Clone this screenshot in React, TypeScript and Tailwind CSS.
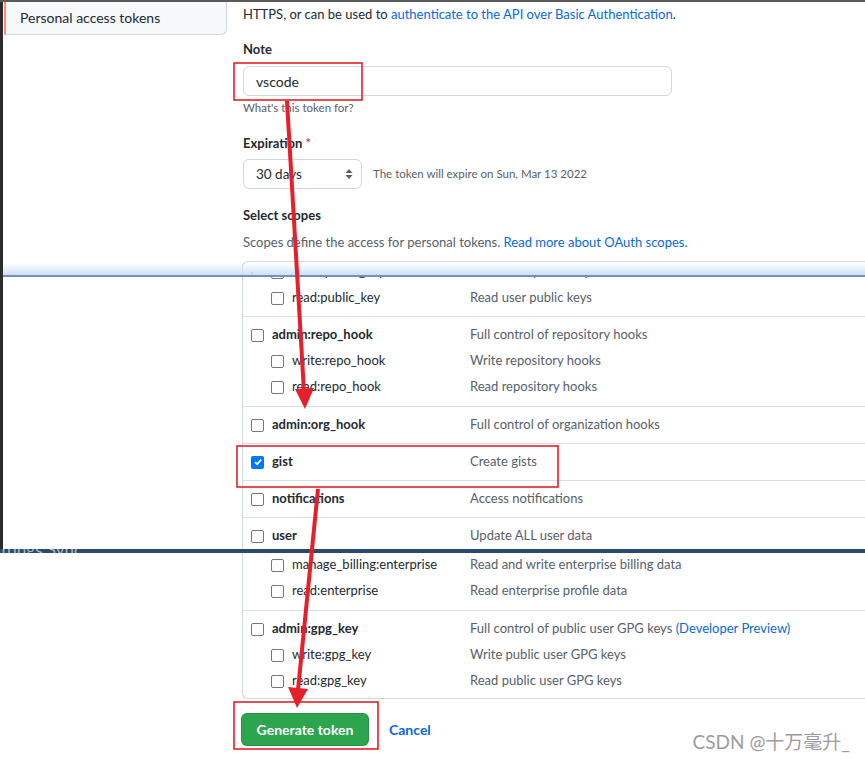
import React from 'react';

type Item = { name: string; desc: React.ReactNode; nested?: boolean; checked?: boolean };

function Check({ checked }: { checked?: boolean }) {
  if (checked) {
    return (
      <span className="flex h-[13px] w-[13px] shrink-0 items-center justify-center rounded-[2px] bg-[#0075ff]">
        <svg width="10" height="10" viewBox="0 0 10 10">
          <path d="M2 5.2 L4.1 7.3 L8.2 2.6" stroke="white" strokeWidth="1.8" fill="none" />
        </svg>
      </span>
    );
  }
  return <span className="h-[13px] w-[13px] shrink-0 rounded-[2px] border border-[#767676] bg-white" />;
}

function Row({ name, desc, nested, checked }: Item) {
  return (
    <div className="flex h-[26px] items-center whitespace-nowrap">
      <div className={nested ? 'flex w-[227px] items-center pl-[28px]' : 'flex w-[227px] items-center pl-[8px]'}>
        <Check checked={checked} />
        <span className={nested ? 'ml-[8px] text-[13px]' : 'ml-[8px] text-[13px] font-bold'}>{name}</span>
      </div>
      <div className="text-[13px] text-[#57606a]">{desc}</div>
    </div>
  );
}

function Group({ items, pad = 'py-[5px]', last }: { items: Item[]; pad?: string; last?: boolean }) {
  return (
    <div className={last ? pad : `border-b border-[#d8dee4] ${pad}`}>
      {items.map((it) => (
        <Row key={it.name} {...it} />
      ))}
    </div>
  );
}

export default function App() {
  return (
    <div className="relative h-[759px] w-[865px] overflow-hidden bg-white font-[Lato,'Noto_Sans_CJK_SC',sans-serif] text-[#24292f]">
      <div className="h-[2px] bg-[#5a5a5a]" />

      <div className="flex">
        {/* dark edge of the window behind */}
        <div className="w-[3px] shrink-0 bg-[#2b2b2b]" />

        <div className="min-w-0 flex-1">
          {/* upper screenshot */}
          <div className="relative h-[273px] overflow-hidden">
            <div className="flex">
              <div className="ml-[1px] flex h-[33px] w-[223px] shrink-0 items-center rounded-br-[6px] border-b border-l-2 border-r border-b-[#d0d7de] border-l-[#fd8c73] border-r-[#d0d7de] bg-[#f6f8fa] pb-[2px] pl-[14px] text-[14px]">
                Personal access tokens
              </div>

              <div className="ml-[16px] min-w-0 flex-1">
                <p className="mt-[2px] h-[20px] whitespace-nowrap text-[13px] leading-[20px]">
                  HTTPS, or can be used to{' '}
                  <span className="text-[#0969da]">authenticate to the API over Basic Authentication</span>.
                </p>

                <div className="mt-[15px] h-[20px] text-[13px] font-bold leading-[20px]">Note</div>
                <div className="mt-[7px] flex h-[30px] w-[429px] items-center rounded-[6px] border border-[#d0d7de] bg-white pl-[12px] text-[14px]">
                  vscode
                </div>
                <div className="mt-[4px] h-[16px] text-[11.5px] leading-[16px] text-[#57606a]">What's this token for?</div>

                <div className="mt-[17px] h-[20px] text-[13px] font-bold leading-[20px]">
                  Expiration <span className="font-normal text-[#cf222e]">*</span>
                </div>
                <div className="mt-[6px] flex items-center">
                  <div className="flex h-[30px] w-[119px] items-center justify-between rounded-[6px] border border-[#d0d7de] bg-white pl-[12px] pr-[8px] text-[13.5px]">
                    30 days
                    <svg width="8" height="12" viewBox="0 0 8 12">
                      <path d="M4 1 L7.5 5 L0.5 5 Z M4 11 L7.5 7 L0.5 7 Z" fill="#57606a" />
                    </svg>
                  </div>
                  <span className="ml-[11px] text-[11.5px] text-[#57606a]">The token will expire on Sun, Mar 13 2022</span>
                </div>

                <div className="mt-[16px] h-[20px] text-[13px] font-bold leading-[20px]">Select scopes</div>
                <p className="mt-[7px] h-[20px] whitespace-nowrap text-[13px] leading-[20px] text-[#57606a]">
                  Scopes define the access for personal tokens.{' '}
                  <span className="text-[#0969da]">Read more about OAuth scopes.</span>
                </p>

                <div className="ml-[-1px] mt-[9px] h-[40px] rounded-tl-[6px] border-l border-t border-[#d0d7de] pl-[8px] pt-[9px]">
                  <Check />
                </div>
              </div>
            </div>
            <div className="absolute bottom-0 left-0 right-0 h-[12px] bg-gradient-to-b from-white/0 to-[#cfe1f6]" />
          </div>
          <div className="h-[2px] bg-[#6f90c2]" />

          {/* middle screenshot */}
          <div className="flex h-[272px] overflow-hidden">
            <div className="w-[239px] shrink-0" />
            <div className="min-w-0 flex-1 border-l border-[#d0d7de]">
              <div className="h-[8px] overflow-hidden">
                <div className="mt-[-18px]">
                  <Row name="write:public_key" desc="Write user public keys" nested />
                </div>
              </div>
              <div className="border-b border-[#d8dee4] pb-[5px]">
                <Row name="read:public_key" desc="Read user public keys" nested />
              </div>
              <Group
                pad="pt-[5px] pb-[6px]"
                items={[
                  { name: 'admin:repo_hook', desc: 'Full control of repository hooks' },
                  { name: 'write:repo_hook', desc: 'Write repository hooks', nested: true },
                  { name: 'read:repo_hook', desc: 'Read repository hooks', nested: true },
                ]}
              />
              <Group items={[{ name: 'admin:org_hook', desc: 'Full control of organization hooks' }]} />
              <Group items={[{ name: 'gist', desc: 'Create gists', checked: true }]} />
              <Group items={[{ name: 'notifications', desc: 'Access notifications' }]} />
              <Group items={[{ name: 'user', desc: 'Update ALL user data' }]} last />
            </div>
          </div>
        </div>
      </div>

      {/* seam to the lower screenshot */}
      <div className="h-[4px] overflow-hidden bg-[#2c4a6e]">
        <div className="mt-[-9px] whitespace-nowrap pl-[1px] text-[17px] leading-[20px] text-[#a9b8ca]">ttings Sync</div>
      </div>

      {/* lower screenshot */}
      <div className="flex">
        <div className="w-[242px] shrink-0" />
        <div className="min-w-0 flex-1 rounded-bl-[6px] border-b border-l border-[#d0d7de]">
          <div className="border-b border-[#d8dee4] pb-[6px]">
            <div className="mt-[-1px]">
              <Row name="manage_billing:enterprise" desc="Read and write enterprise billing data" nested />
            </div>
            <Row name="read:enterprise" desc="Read enterprise profile data" nested />
          </div>
          <Group
            last
            pad="pt-[5px] pb-[4px]"
            items={[
              {
                name: 'admin:gpg_key',
                desc: (
                  <>
                    Full control of public user GPG keys <span className="text-[#0969da]">(Developer Preview)</span>
                  </>
                ),
              },
              { name: 'write:gpg_key', desc: 'Write public user GPG keys', nested: true },
              { name: 'read:gpg_key', desc: 'Read public user GPG keys', nested: true },
            ]}
          />
        </div>
      </div>

      <div className="mt-[14px] flex items-center pl-[241px]">
        <button className="h-[33px] w-[128px] rounded-[6px] border border-[#1b1f2426] bg-[#2da44e] text-[14px] font-bold text-white">
          Generate token
        </button>
        <span className="ml-[20px] text-[14px] font-bold text-[#0969da]">Cancel</span>
      </div>

      <div className="absolute bottom-[6px] right-[15px] text-[19px] leading-[22px] text-[#9c9c9c]">CSDN @十万毫升_</div>

      {/* red annotations */}
      <svg className="pointer-events-none absolute inset-0" width="865" height="759" viewBox="0 0 865 759">
        <g stroke="#e5202a" fill="none">
          <rect x="234" y="63" width="128" height="37" strokeWidth="1.6" />
          <rect x="237" y="446" width="321" height="41" strokeWidth="1.6" />
          <rect x="234" y="702" width="144" height="47" strokeWidth="1.6" />
          <line x1="287" y1="101" x2="304" y2="392" strokeWidth="4" />
          <line x1="318" y1="489" x2="298" y2="690" strokeWidth="4" />
        </g>
        <g fill="#e5202a">
          <polygon points="295,389 314,388 305,409" />
          <polygon points="288,687 308,689 297,708" />
        </g>
      </svg>
    </div>
  );
}
